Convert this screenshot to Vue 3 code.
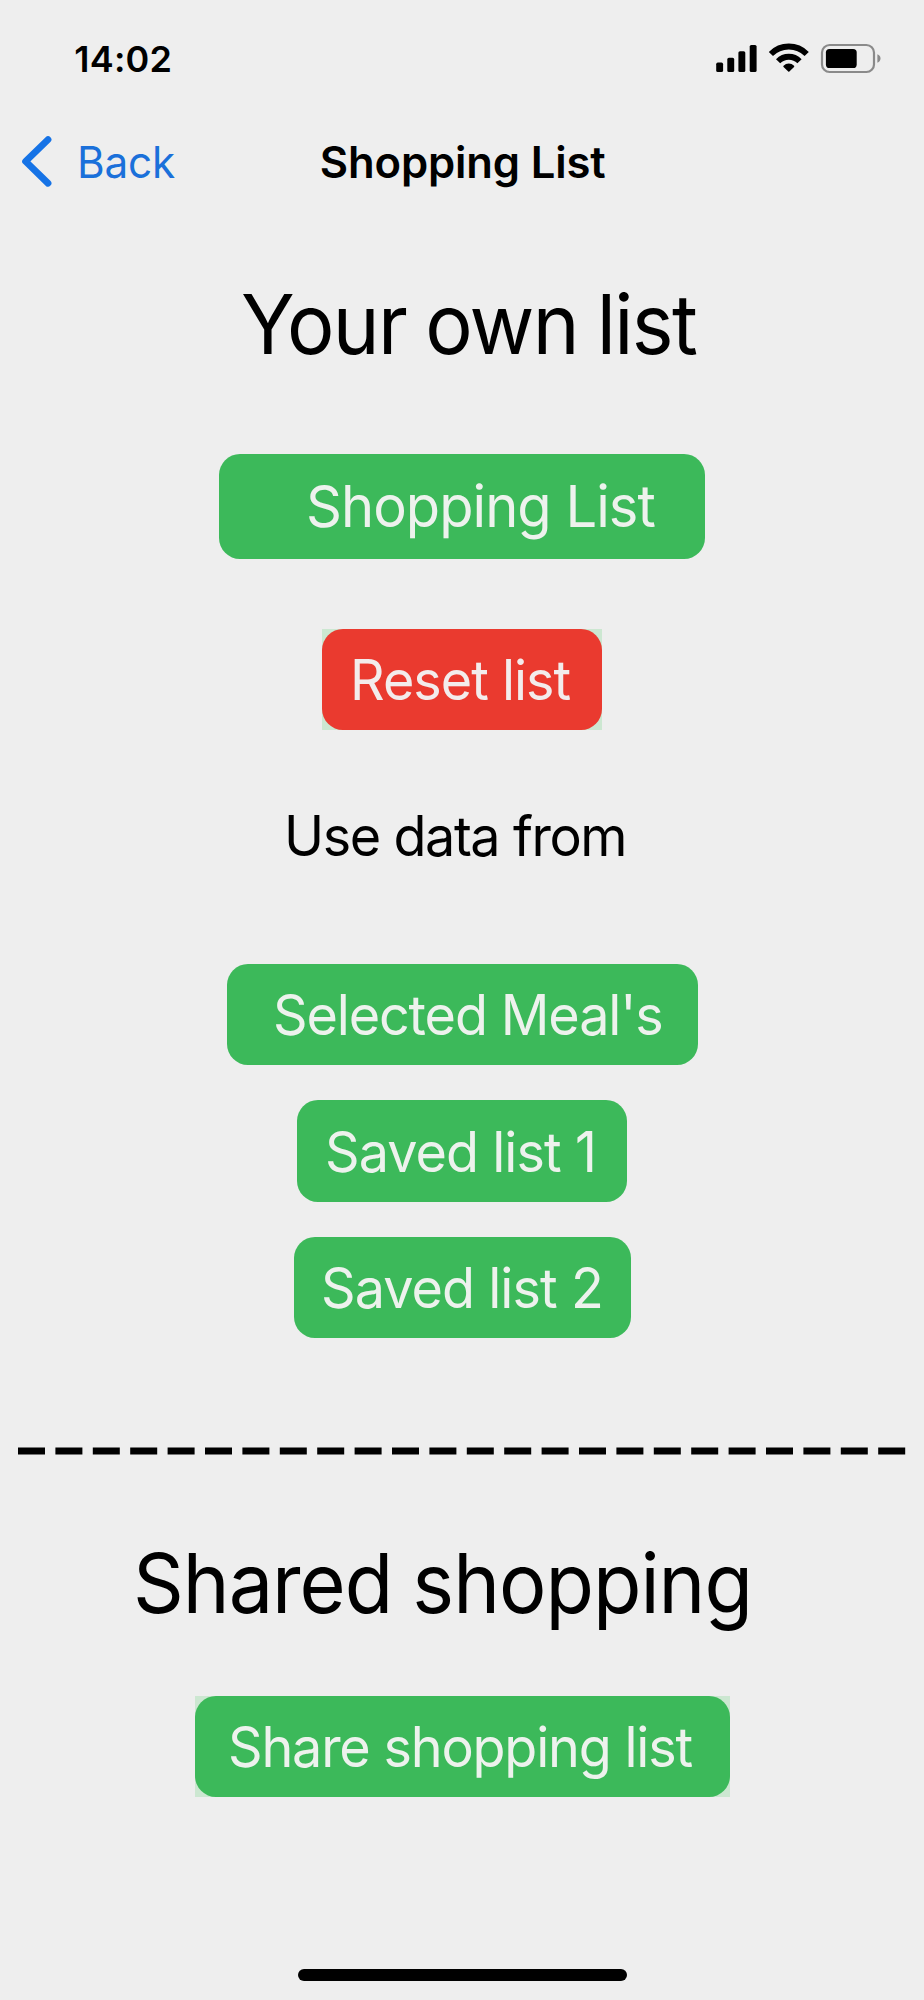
<script setup>
const savedLists = [
  { id: 'one', label: 'Saved list 1' },
  { id: 'two', label: 'Saved list 2' },
]
</script>

<template>
  <main class="screen">
    <header class="status">
      <span class="time">14:02</span>
      <svg class="indicators" viewBox="714 43 170 32" width="170" height="32" aria-hidden="true">
        <!-- cellular signal -->
        <rect x="716.2" y="62.6" width="6.9" height="9.4" rx="1.6" />
        <rect x="727.3" y="57.8" width="6.9" height="14.2" rx="1.6" />
        <rect x="738.4" y="51.2" width="6.9" height="20.8" rx="1.6" />
        <rect x="749.7" y="45" width="6.9" height="27" rx="1.6" />
        <!-- wifi -->
        <g fill="none" stroke="#000" stroke-width="5.9">
          <path d="M770.9 54 A25.2 25.2 0 0 1 806.7 54" />
          <path d="M778.1 61.2 A15 15 0 0 1 799.5 61.2" />
        </g>
        <path d="M788.8 70.8 L784.1 66.3 A6.8 6.8 0 0 1 793.5 66.3 Z" stroke="#000" stroke-width="1.6" stroke-linejoin="round" />
        <!-- battery -->
        <rect x="822" y="45" width="52" height="27" rx="7.6" fill="none" stroke="#8a8a8a" stroke-width="2.2" />
        <rect x="825.9" y="49" width="30.8" height="19" rx="3.6" />
        <path d="M877.4 54.3 Q880.5 55.6 880.5 58.5 Q880.5 61.4 877.4 62.7 Z" fill="#8a8a8a" />
      </svg>
    </header>

    <nav class="nav">
      <a class="back">
        <svg viewBox="20 134 32 56" width="32" height="56" aria-hidden="true">
          <path d="M48 139.6 L25.6 161.4 L48 183.2" fill="none" stroke="#1673e6" stroke-width="6.8" stroke-linecap="round" stroke-linejoin="round" />
        </svg>
        <span class="text back-text">Back</span>
      </a>
      <span class="title">Shopping List</span>
    </nav>

    <h1 class="heading own"><span class="text">Your own list</span></h1>

    <button class="btn shopping"><span class="text">Shopping List</span></button>

    <div class="backing reset-backing">
      <button class="btn reset"><span class="text">Reset list</span></button>
    </div>

    <p class="source"><span class="text">Use data from</span></p>

    <button class="btn meals"><span class="text">Selected Meal's</span></button>
    <button v-for="list in savedLists" :key="list.id" class="btn saved" :class="list.id">
      <span class="text">{{ list.label }}</span>
    </button>

    <svg class="divider" width="888" height="8" viewBox="0 0 888 8" aria-hidden="true">
      <line x1="0" y1="4" x2="887.4" y2="4" stroke="#000" stroke-width="7" stroke-dasharray="27 10.4" />
    </svg>

    <h2 class="heading shared"><span class="text">Shared shopping</span></h2>

    <div class="backing share-backing">
      <button class="btn share"><span class="text">Share shopping list</span></button>
    </div>

    <div class="home"></div>
  </main>
</template>

<style>
body {
  background: #eeeeee;
}
</style>

<style scoped>
.screen {
  box-sizing: border-box;
  width: 924px;
  height: 2000px;
  overflow: hidden;
  display: flex;
  flex-direction: column;
  align-items: center;
  background: #eeeeee;
  color: #000;
  font-family: Inter, "Liberation Sans", sans-serif;
  white-space: nowrap;
}
.status {
  box-sizing: border-box;
  flex: none;
  width: 100%;
  height: 118px;
  padding: 0 40px 0 74.3px;
  display: flex;
  align-items: center;
  justify-content: space-between;
}
.time {
  font-size: 36px;
  font-weight: 600;
  letter-spacing: 0.2px;
}
.nav {
  flex: none;
  width: 100%;
  height: 88px;
  display: flex;
  align-items: center;
}
.back {
  box-sizing: border-box;
  width: 319.8px;
  padding-left: 20px;
  display: flex;
  align-items: center;
  color: #1a70da;
}
.back-text {
  margin-left: 24.5px;
  font-size: 43.6px;
  letter-spacing: -0.2px;
}
.title {
  font-size: 43.6px;
  font-weight: 600;
  letter-spacing: -0.15px;
}
.text {
  display: inline-block;
  transform: scaleX(0.97);
  transform-origin: left center;
}
.heading {
  flex: none;
  box-sizing: border-box;
  width: 100%;
  height: 100px;
  margin: 0;
  font-size: 82.5px;
  line-height: 100px;
  font-weight: 400;
}
.heading .text {
  transform: scaleX(0.96);
}
.own {
  margin-top: 67.7px;
  padding-left: 241px;
  letter-spacing: -1.75px;
  word-spacing: -1.6px;
}
.btn {
  flex: none;
  box-sizing: border-box;
  display: flex;
  align-items: center;
  justify-content: flex-start;
  height: 101.4px;
  padding: 0;
  border: 0;
  border-radius: 21px;
  background: #3cb95a;
  color: #edf2ed;
  font-family: inherit;
  font-size: 55.6px;
  font-weight: 400;
}
.shopping {
  width: 485.4px;
  height: 104.4px;
  margin-top: 80.6px;
  padding-left: 86.6px;
  font-size: 57.8px;
  letter-spacing: -1px;
}
.backing {
  flex: none;
  background: #cce7d1;
}
.reset-backing {
  margin-top: 70.1px;
}
.reset {
  width: 279.6px;
  padding-left: 27.6px;
  background: #ea3a2f;
  color: #f3ecec;
  letter-spacing: -1.05px;
}
.source {
  flex: none;
  box-sizing: border-box;
  width: 100%;
  height: 70px;
  margin: 70.6px 0 0;
  padding-left: 283.8px;
  font-size: 55.6px;
  line-height: 70px;
  letter-spacing: -1.48px;
}
.meals {
  width: 471px;
  margin-top: 93px;
  padding-left: 46.8px;
  letter-spacing: -1.18px;
}
.saved {
  margin-top: 35.2px;
  letter-spacing: -0.98px;
}
.saved.one {
  width: 330px;
  padding-left: 27.5px;
}
.saved.two {
  width: 337px;
  padding-left: 27.4px;
}
.divider {
  flex: none;
  display: block;
  width: 888px;
  margin-top: 109px;
  margin-left: -1px;
}
.shared {
  margin-top: 78px;
  padding-left: 133px;
  letter-spacing: -1.05px;
  word-spacing: -1.2px;
}
.share-backing {
  margin-top: 62.4px;
}
.share {
  width: 535px;
  padding-left: 33.8px;
  letter-spacing: -1.25px;
}
.home {
  flex: none;
  width: 329px;
  height: 12px;
  margin: auto 0 19px;
  border-radius: 6px;
  background: #000;
}
</style>
